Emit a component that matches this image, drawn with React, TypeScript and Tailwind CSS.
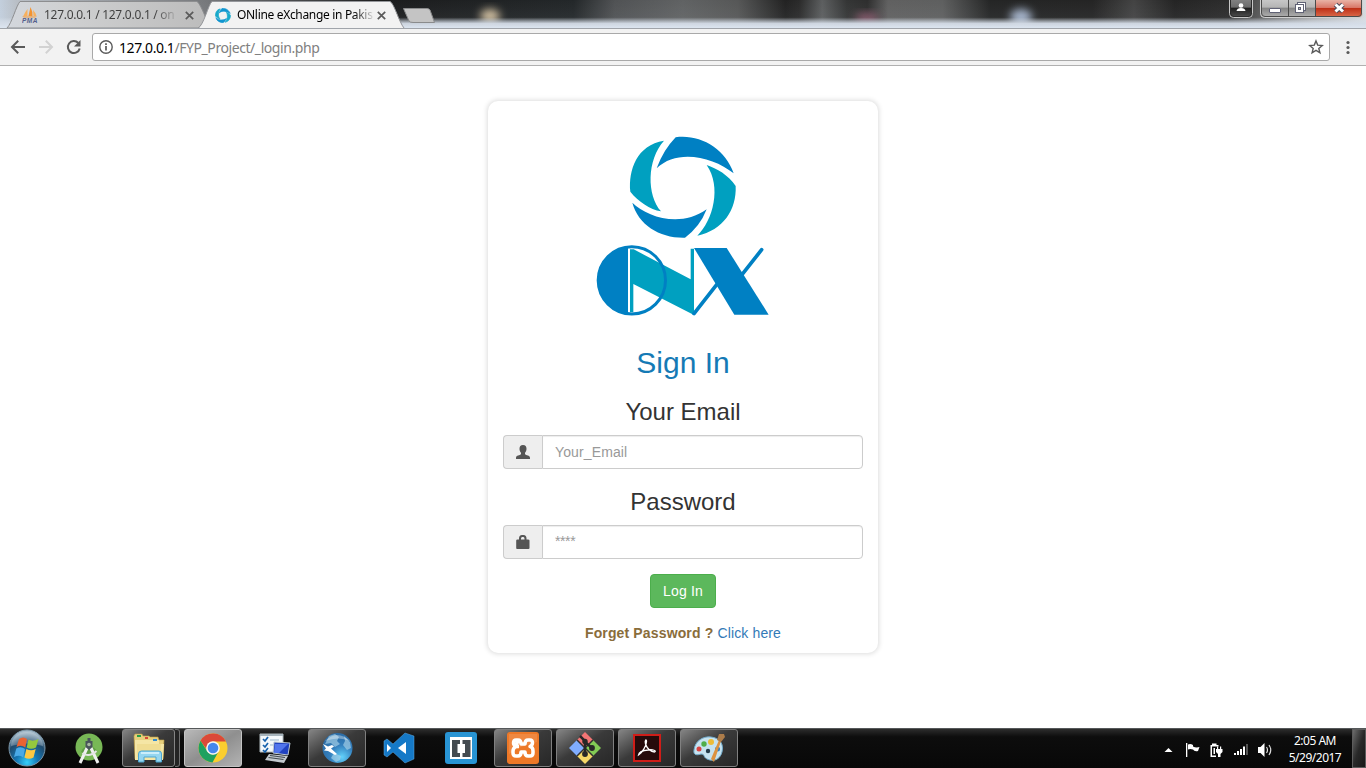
import React from "react";

function TitleBackdrop() {
  return (
    <svg className="col-start-1 row-start-1 h-7 w-[1366px]" viewBox="0 0 1366 28" preserveAspectRatio="none">
      <defs>
        <linearGradient id="glass" x1="0" x2="1366" y1="0" y2="0" gradientUnits="userSpaceOnUse">
          <stop offset="0" stopColor="#c3cfdd" />
          <stop offset="0.012" stopColor="#b9bfc6" />
          <stop offset="0.15" stopColor="#77797c" />
          <stop offset="0.28" stopColor="#1b1c1d" />
          <stop offset="0.42" stopColor="#232729" />
          <stop offset="0.45" stopColor="#505254" />
          <stop offset="0.5" stopColor="#606263" />
          <stop offset="0.54" stopColor="#565757" />
          <stop offset="0.575" stopColor="#222" />
          <stop offset="0.585" stopColor="#2a2a2a" />
          <stop offset="0.602" stopColor="#5c5e5f" />
          <stop offset="0.62" stopColor="#343535" />
          <stop offset="0.635" stopColor="#2e2e2e" />
          <stop offset="0.65" stopColor="#606060" />
          <stop offset="0.69" stopColor="#5e5f5f" />
          <stop offset="0.725" stopColor="#242525" />
          <stop offset="0.8" stopColor="#242424" />
          <stop offset="0.83" stopColor="#434343" />
          <stop offset="0.86" stopColor="#242424" />
          <stop offset="0.9" stopColor="#2c2c2c" />
          <stop offset="0.96" stopColor="#a3a3a3" />
          <stop offset="1" stopColor="#d6dade" />
        </linearGradient>
        <linearGradient id="haze" x1="0" x2="0" y1="0" y2="1">
          <stop offset="0" stopColor="#dce5ef" stopOpacity="0" />
          <stop offset="0.62" stopColor="#dce5ef" stopOpacity="0.05" />
          <stop offset="0.84" stopColor="#d5dde8" stopOpacity="0.95" />
          <stop offset="1" stopColor="#dce5f0" />
        </linearGradient>
        <linearGradient id="idle" x1="7" x2="205" y1="28" y2="0" gradientUnits="userSpaceOnUse">
          <stop offset="0" stopColor="#d3d7dd" />
          <stop offset=".3" stopColor="#cfd0d1" />
          <stop offset="1" stopColor="#bcbcbc" />
        </linearGradient>
        <filter id="soft" x="-50%" y="-50%" width="200%" height="200%">
          <feGaussianBlur stdDeviation="4" />
        </filter>
      </defs>
      <rect width="1366" height="28" fill="url(#glass)" />
      <ellipse cx="490" cy="16" rx="10" ry="7" fill="#d0be9e" filter="url(#soft)" />
      <ellipse cx="867" cy="18" rx="12" ry="5" fill="#87576a" filter="url(#soft)" />
      <ellipse cx="1021" cy="17" rx="11" ry="8" fill="#a4b3cb" filter="url(#soft)" />
      <rect width="1366" height="28" fill="url(#haze)" />
      <path d="M7 28C12 23 16 6 20 1.500H197C201 4 208 24 210 28Z" fill="url(#idle)" stroke="#8d8e90" />
      <path d="M198 29C204 25 208 5 212 1.500H390C394 3 399 22 404 29Z" fill="#f2f2f2" />
      <path d="M198 28C204 25 208 5 212 1.500H390C394 3 399 22 404 28" fill="none" stroke="#95979b" />
      <path d="M403.500 8.500H427Q429 8.500 430 10L434.500 22.500H413Q410 22.500 409 21Z" fill="#c4c4c4" stroke="#8a8b8c" />
    </svg>
  );
}

function RingMark({ className }: { className: string }) {
  return (
    <svg className={className} viewBox="148 42 322 320" strokeWidth="16">
      <path d="M230 145Q250 90 287 52C360 42 435 85 461 160C400 110 290 85 230 145Z" fill="#1296d0" stroke="#1296d0" />
      <path d="M380 135C410 145 445 165 467 198C470 270 430 330 352 347C400 300 425 200 380 135Z" fill="#18aacb" stroke="#18aacb" />
      <path d="M157 248C200 290 300 325 380 268Q360 320 315 353C240 355 175 315 157 248Z" fill="#1296d0" stroke="#1296d0" />
      <path d="M252 62C170 75 145 150 151 215C175 245 210 268 243 274C200 225 200 120 252 62Z" fill="#18aacb" stroke="#18aacb" />
    </svg>
  );
}

function TabClose() {
  return (
    <svg className="h-[9px] w-[9px] shrink-0" viewBox="0 0 9 9">
      <path d="M.8.8 8.200 8.200M8.200.8.8 8.200" stroke="#5a5a5a" strokeWidth="1.700" />
    </svg>
  );
}

function WindowControls() {
  return (
    <svg className="h-[19px] w-[137px]" viewBox="1229 0 137 19">
      <defs>
        <linearGradient id="wb" x1="0" x2="0" y1="0" y2="1">
          <stop offset="0" stopColor="#d6d6d6" />
          <stop offset=".56" stopColor="#b5b5b5" />
          <stop offset=".6" stopColor="#858585" />
          <stop offset="1" stopColor="#b2b2b2" />
        </linearGradient>
        <linearGradient id="ub" x1="0" x2="0" y1="0" y2="1">
          <stop offset="0" stopColor="#909090" />
          <stop offset=".56" stopColor="#6c6c6c" />
          <stop offset=".6" stopColor="#1d1d1d" />
          <stop offset="1" stopColor="#515151" />
        </linearGradient>
        <linearGradient id="rb" x1="0" x2="0" y1="0" y2="1">
          <stop offset="0" stopColor="#e9b3a6" />
          <stop offset=".44" stopColor="#d9796a" />
          <stop offset=".5" stopColor="#bf3118" />
          <stop offset="1" stopColor="#db6b4b" />
        </linearGradient>
      </defs>
      <rect x="1229.500" y="-6" width="23" height="23.500" rx="4" fill="url(#ub)" stroke="#c6c6c6" />
      <rect x="1260.500" y="-6" width="102" height="23.500" rx="4" fill="url(#wb)" stroke="#d0d0d0" />
      <path d="M1315.500 0V17H1358Q1362 17 1362 13V0Z" fill="url(#rb)" />
      <path d="M1261.500 0V13Q1261.500 16.500 1265 16.500H1358Q1361.500 16.500 1361.500 13V0M1288.500 0V17M1315.500 0V17" fill="none" stroke="#4b4b4b" />
      <path d="M1230.500 0V13Q1230.500 16.500 1234 16.500H1248Q1251.500 16.500 1251.500 13V0" fill="none" stroke="#2b2b2b" />
      <circle cx="1241" cy="5.500" r="2.300" fill="#fff" />
      <path d="M1236.500 11Q1237 8 1241 8T1245.500 11Z" fill="#fff" />
      <rect x="1269.500" y="8.500" width="11" height="4" rx=".5" fill="#fff" stroke="#606275" />
      <rect x="1297.500" y="2.500" width="8" height="8" fill="#fff" stroke="#606275" />
      <rect x="1295.500" y="4.500" width="8" height="8" fill="#fff" stroke="#606275" />
      <rect x="1298.500" y="7.500" width="2" height="2" fill="#bbb" stroke="#606275" />
      <path d="M1335.500 4.500 1343 11.500M1343 4.500 1335.500 11.500" stroke="#4c4c5c" strokeWidth="5" />
      <path d="M1335.500 4.500 1343 11.500M1343 4.500 1335.500 11.500" stroke="#fff" strokeWidth="3" />
    </svg>
  );
}

function TitleBar() {
  return (
    <header className="grid h-7 grid-cols-[1366px] overflow-hidden">
      <TitleBackdrop />
      <div className="z-10 col-start-1 row-start-1 flex h-7 items-start font-['Noto_Sans','Open_Sans',sans-serif] text-[12px] leading-4">
        <div className="flex h-7 w-[198px] items-center pt-0.5 pl-[22px]">
          <svg className="h-4 w-4 shrink-0" viewBox="0 0 16 16">
            <path d="M1 9.500Q3 5 5.500 2V9Z" fill="#f8b05c" />
            <path d="M6.500 9C7 6 8 3 8.500 0Q11 5 10.500 9.300Z" fill="#f39330" />
            <path d="M11 3Q14 6 14.500 9H11.500Z" fill="#f8b05c" />
            <path d="M0 9.500H15L13 10.500H2Z" fill="#f29a3e" />
            <text x="0" y="15.800" fill="#54608c" fontFamily="Liberation Sans" fontWeight="700" fontStyle="italic" fontSize="6.500" textLength="15.500">PMA</text>
          </svg>
          <span className="ml-1.5 w-[141px] shrink-0">
            <span className="inline-block bg-gradient-to-r from-[#3d3d3d] from-85% to-[#3d3d3d]/20 bg-clip-text whitespace-nowrap text-transparent tracking-[-0.28px]">127.0.0.1 / 127.0.0.1 / on</span>
          </span>
          <TabClose />
        </div>
        <div className="flex h-7 w-[206px] items-center pt-0.5 pl-[17px]">
          <RingMark className="h-[15px] w-4 shrink-0" />
          <span className="ml-1.5 w-[140px] shrink-0">
            <span className="inline-block bg-gradient-to-r from-black from-86% to-black/10 bg-clip-text whitespace-nowrap text-transparent tracking-[-0.32px]">ONline eXchange in Pakis</span>
          </span>
          <TabClose />
        </div>
        <div className="ml-auto"><WindowControls /></div>
      </div>
    </header>
  );
}

function Toolbar() {
  return (
    <div className="flex h-[38px] items-center border-t border-b border-t-[#a0a4aa] border-b-[#b0b0b0] bg-[#f2f2f2] font-['Noto_Sans','Open_Sans',sans-serif]">
      <svg className="h-9 w-[92px] shrink-0" viewBox="0 29 92 36" fill="none" strokeWidth="2">
        <path d="M25 47H12.500M18.200 40.800 12 47 18.200 53.200" stroke="#5a5a5a" />
        <path d="M39 47H51.500M45.800 40.800 52 47 45.800 53.200" stroke="#d2d2d2" />
        <path d="M78.300 43A6 6 0 1 0 79.700 48.500" stroke="#5a5a5a" />
        <path d="M80.500 40V46.500H74Z" fill="#5a5a5a" />
      </svg>
      <div className="flex h-7 w-[1238px] items-center rounded-[3px] border border-[#a9a9a9] bg-white pl-[6px] pr-[5px] text-[14px]">
        <svg className="h-[14px] w-[14px] shrink-0" viewBox="0 0 14 14" fill="none" stroke="#5a5a5a">
          <circle cx="7" cy="7" r="6.200" strokeWidth="1.400" />
          <path d="M7 6V10.500M7 3.300V5" strokeWidth="1.700" />
        </svg>
        <span className="ml-1.5 tracking-[-0.43px] whitespace-nowrap text-black">127.0.0.1<span className="text-[#808080]">/FYP_Project/_login.php</span></span>
        <svg className="ml-auto h-4 w-4" viewBox="0 0 16 16">
          <path d="M8 1.900 9.700 6.100 14.300 6.500 10.800 9.400 11.900 13.800 8 11.400 4.100 13.800 5.200 9.400 1.700 6.500 6.300 6.100Z" fill="none" stroke="#5a5a5a" strokeWidth="1.400" />
        </svg>
      </div>
      <svg className="ml-4 h-4 w-1" viewBox="0 0 4 16" fill="#5a5a5a">
        <circle cx="2" cy="3.500" r="1.600" /><circle cx="2" cy="8.500" r="1.600" /><circle cx="2" cy="13.500" r="1.600" />
      </svg>
    </div>
  );
}

function Logo() {
  return (
    <svg className="h-[210px] w-[210px]" viewBox="-6 0 630 630">
      <path d="M230 145Q250 90 287 52C360 42 435 85 461 160C400 110 290 85 230 145Z" fill="#0080c3" />
      <path d="M380 135C410 145 445 165 467 198C470 270 430 330 352 347C400 300 425 200 380 135Z" fill="#00a0c0" />
      <path d="M157 248C200 290 300 325 380 268Q360 320 315 353C240 355 175 315 157 248Z" fill="#0080c3" />
      <path d="M252 62C170 75 145 150 151 215C175 245 210 268 243 274C200 225 200 120 252 62Z" fill="#00a0c0" />
      <path d="M150 388H161L332 478V386H342V585L160 492V577H150Z" fill="#00a0c0" />
      <path d="M144 378.500A103.500 103.500 0 0 0 144 583.500Z" fill="#0080c3" />
      <circle cx="155.500" cy="481" r="101" fill="none" stroke="#0080c3" strokeWidth="9" />
      <path d="M342 384H440L566 584H463Z" fill="#0080c3" />
      <path d="M545 389 486 464M410 494 342 581" stroke="#0080c3" strokeWidth="11" strokeLinecap="round" />
    </svg>
  );
}

function Field({ icon, type, placeholder }: { icon: React.ReactNode; type: string; placeholder: string }) {
  return (
    <div className="flex h-[34px] w-[360px]">
      <span className="flex w-[39px] items-center justify-center rounded-l border border-r-0 border-[#ccc] bg-[#eee]">{icon}</span>
      <input
        type={type}
        placeholder={placeholder}
        className={
          type === "password"
            ? "w-[321px] rounded-r border border-[#ccc] bg-white px-3 pb-0.5 text-[14px] tracking-[-0.4px] shadow-[inset_0_1px_1px_rgba(0,0,0,0.075)] outline-none placeholder:text-[#999]"
            : "w-[321px] rounded-r border border-[#ccc] bg-white px-3 text-[14px] tracking-[0.12px] shadow-[inset_0_1px_1px_rgba(0,0,0,0.075)] outline-none placeholder:text-[#999]"
        }
      />
    </div>
  );
}

function LoginCard() {
  return (
    <form className="flex h-[552px] w-[390px] flex-col items-center rounded-[10px] bg-white pt-[19px] font-['Liberation_Sans',Arial,sans-serif] text-[14px] text-[#333] shadow-[0_0_5px_1px_#ddd]" onSubmit={(e) => e.preventDefault()}>
      <Logo />
      <h2 className="mt-4 text-[30px] leading-[33px] text-[#157ab5]">Sign In</h2>
      <h3 className="mt-5 text-[24px] leading-[26px]">Your Email</h3>
      <div className="mt-[10px]">
        <Field
          type="text"
          placeholder="Your_Email"
          icon={
            <svg className="h-[14px] w-[14px]" viewBox="0 0 14 14" fill="#555">
              <path d="M7 0C9.500 0 10.500 1.400 10.500 3.700C10.500 5.500 9.900 6.800 9 7.700V9.300C10 10.300 14 10.500 14 12.700V14H0V12.700C0 10.500 4 10.300 5 9.300V7.700C4.100 6.800 3.500 5.500 3.500 3.700C3.500 1.400 4.500 0 7 0Z" />
            </svg>
          }
        />
      </div>
      <h3 className="mt-5 text-[24px] leading-[26px]">Password</h3>
      <div className="mt-[10px]">
        <Field
          type="password"
          placeholder="****"
          icon={
            <svg className="h-[14px] w-[14px]" viewBox="0 0 14 14" fill="#555">
              <path d="M1.500 4.500H3V3.500Q3 0 6 0H7.500Q10.500 0 10.500 3.500V4.500H12Q13.500 4.500 13.500 5.500V13Q13.500 14 12.500 14H1Q.2 14 .2 13V5.500Q.2 4.500 1.500 4.500ZM5 4.500H8.500V3.800Q8.500 2 7.300 2H6.200Q5 2 5 3.800Z" fillRule="evenodd" />
            </svg>
          }
        />
      </div>
      <button className="mt-[15px] h-[34px] w-[66px] rounded border border-[#4cae4c] bg-[#5cb85c] tracking-[0.15px] whitespace-nowrap text-white">Log In</button>
      <p className="mt-[15px] leading-5 tracking-[0.14px] whitespace-nowrap">
        <b className="text-[#8a6d3b]">Forget Password ?</b> <a className="text-[#337ab7]" href="#">Click here</a>
      </p>
    </form>
  );
}

function TaskButton({ active, children }: { active?: boolean; children: React.ReactNode }) {
  return (
    <div
      className={
        active
          ? "flex h-[38px] w-[58px] items-center justify-center rounded-[3px] border border-[#c4c4c4] bg-gradient-to-br from-[#b9b9b9] via-[#8f8f8f] to-[#b3b3b3]"
          : "flex h-[38px] w-[58px] items-center justify-center rounded-[3px] border border-[#808080] bg-gradient-to-br from-[#858585] via-[#3a3a3a] via-45% to-[#272727]"
      }
    >
      {children}
    </div>
  );
}

function Plain({ children }: { children: React.ReactNode }) {
  return <div className="flex h-[38px] w-[58px] items-center justify-center">{children}</div>;
}

function StartOrb() {
  return (
    <svg className="h-[38px] w-[38px]" viewBox="0 0 38 38">
      <defs>
        <radialGradient id="orb" cx=".5" cy=".9" r=".85">
          <stop offset="0" stopColor="#36d0fa" />
          <stop offset=".35" stopColor="#1577b5" />
          <stop offset=".7" stopColor="#204b6d" />
          <stop offset="1" stopColor="#a6bccb" />
        </radialGradient>
      </defs>
      <circle cx="19" cy="19" r="18" fill="url(#orb)" stroke="#7b96a8" />
      <path d="M3 17A16 14 0 0 1 35 17Q19 12 3 17Z" fill="#fff" opacity=".25" />
      <path d="M11 10Q15 7 19 10L17.300 18.500Q13.500 15.500 8.500 18Z" fill="#ea6332" />
      <path d="M20.500 10.500Q24.500 13 30.500 10L28 18.500Q23 21 18.700 18.500Z" fill="#94c83d" />
      <path d="M8.300 19.500Q13 17 17 20L15.200 28.500Q12 25.500 6 28Z" fill="#4aa9e6" />
      <path d="M18.400 20Q23 22.500 27.700 20L25.500 28.500Q21 31 16.400 28.500Z" fill="#fdc843" />
    </svg>
  );
}

function AndroidStudio() {
  return (
    <svg className="h-8 w-8" viewBox="0 0 32 32">
      <circle cx="16" cy="15" r="13.500" fill="#78b856" />
      <path d="M8 20A8.500 8.500 0 0 1 24 20L20 22H12Z" fill="#5f9d45" />
      <path d="M14.500 15 7 31M17.500 15 25 31" stroke="#f0f0f0" strokeWidth="3" />
      <path d="M9.500 21Q16 26 23.500 19" fill="none" stroke="#e5e5e5" strokeWidth="2" />
      <path d="M14.500 6H17.500V9H19.500V15L16 18 12.500 15V9H14.500Z" fill="#49545a" />
      <circle cx="16" cy="12.500" r="1.800" fill="#a6b7a0" />
    </svg>
  );
}

function Explorer() {
  return (
    <svg className="h-8 w-8" viewBox="0 0 32 32">
      <path d="M1 4 2 2H9L10 4H16L17 5H25L26 8H31L30 27H2Z" fill="#e7cf7c" stroke="#bd9d48" strokeWidth=".6" />
      <path d="M2 8H26V12H31L30 28H2Z" fill="#f5e6a5" />
      <path d="M4 12H28V25H4Z" fill="#eed88b" opacity=".7" />
      <path d="M4 3H8V5H4Z" fill="#259e47" />
      <path d="M12 5H15V7H12Z" fill="#d54a36" />
      <path d="M20 7H24V9H20Z" fill="#338bd0" />
      <path d="M5.500 30V22Q5.500 19 8.500 19H26Q28.500 19 28.500 22V30H23V25H11V30Z" fill="#95d6f0" stroke="#4ca7d1" />
      <path d="M8 21H26" stroke="#def6ff" strokeWidth="1.500" />
    </svg>
  );
}

function Chrome() {
  return (
    <svg className="h-[30px] w-[30px]" viewBox="0 0 30 30">
      <circle cx="15" cy="15" r="14.500" fill="#fbce2f" />
      <path d="M2.500 7.700A14.500 14.500 0 0 1 28 8.500H15A6.500 6.500 0 0 0 8.700 16.500Z" fill="#db4939" />
      <path d="M2.500 7.700A14.500 14.500 0 0 0 14.500 29.500L20.500 18.500A6.500 6.500 0 0 1 9.300 18.200Z" fill="#1da160" />
      <circle cx="15" cy="15" r="6.800" fill="#f5f5f5" />
      <circle cx="15" cy="15" r="5.300" fill="#4587ed" />
    </svg>
  );
}

function TaskList() {
  return (
    <svg className="h-8 w-8" viewBox="0 0 32 32">
      <path d="M1 2H24V20H1Z" fill="#f4f8fb" stroke="#aeb8bd" />
      <path d="M1 2H24V4H1Z" fill="#a7b4bc" />
      <path d="M4 7 6 9 9 5M4 13 6 15 9 11M4 18 6 20 9 16" fill="none" stroke="#1762ad" strokeWidth="1.700" />
      <path d="M11 8H20M11 13H14" stroke="#9ab5c9" />
      <path d="M15 10 31 11 29 23 14 21Z" fill="#2042c0" stroke="#becbd3" />
      <path d="M16 12H29L20 21H15Z" fill="#668cff" opacity=".7" />
      <path d="M10 22 29 24 25 31 6 28Z" fill="#c3c9ce" />
      <path d="M11 23.500 26 25.500M9.500 25.500 24.500 27.500" stroke="#414b51" strokeWidth="1.200" />
    </svg>
  );
}

function Globe() {
  return (
    <svg className="h-8 w-8" viewBox="0 0 32 32">
      <defs>
        <radialGradient id="globe" cx=".65" cy=".8" r=".8">
          <stop stopColor="#62d2fb" /><stop offset=".5" stopColor="#347fbd" /><stop offset="1" stopColor="#2b6ba4" />
        </radialGradient>
      </defs>
      <circle cx="16.500" cy="16" r="15" fill="url(#globe)" />
      <path d="M8 4 14 2 18 5 16 9 19 12 14 15 10 11 4 12ZM23 4 29 10 30 16 26 18 22 13 24 9ZM13 21 20 24 19 28 15 30 10 26Z" fill="#a9d2e8" opacity=".65" />
      <path d="M2 12 7 14.500 11 13 13 14.500 10 16.500 16 22 14 23 7 19 3 18.500 5 16.500Z" fill="#fff" />
      <path d="M4 9Q16 -3 29 9Q18 4 4 9Z" fill="#fff" opacity=".35" />
    </svg>
  );
}

function VsCode() {
  return (
    <svg className="h-8 w-8" viewBox="0 0 32 32">
      <path d="M22 1 31 4V27L22 31 10 20 4 25 1 23V9L4 7 10 12Z" fill="#1579c7" stroke="#63a9dd" strokeWidth=".5" />
      <path d="M4 12 8 16 4 20ZM23 10V22L15 16Z" fill="#fff" />
    </svg>
  );
}

function Brackets() {
  return (
    <svg className="h-8 w-8" viewBox="0 0 32 32">
      <rect width="32" height="32" rx="3" fill="#2894d4" />
      <rect x="5" y="5" width="22" height="22" fill="#fff" />
      <path d="M7 8H15V12H12.500V21H15V25H7ZM17.500 8H25.500V25H17.500V21H20V12H17.500Z" fill="#444b50" />
    </svg>
  );
}

function Xampp() {
  return (
    <svg className="h-8 w-8" viewBox="0 0 32 32">
      <rect width="32" height="32" rx="3" fill="#ed7827" />
      <path d="M2 2H30V10Q15 13 2 22Z" fill="#fff" opacity=".12" />
      <path d="M11 8H9Q6.500 8 6.500 11Q6.500 13 9 14.500M9 14.500H12M9 14.500Q6 16 6 19V21Q6 24 9 24H11Q14 24 14 20H18Q18 24 21 24H23Q26 24 26 21V19Q26 15 23 14.500Q25.500 13 25.500 11Q25.500 8 23 8H21Q18 8 18 12H14Q14 8 11 8Z" fill="none" stroke="#fff" strokeWidth="3.500" strokeLinejoin="round" />
    </svg>
  );
}

function Git() {
  return (
    <svg className="h-8 w-8" viewBox="0 0 32 32">
      <path d="M16 0 24 8 16 16 8 8Z" fill="#f27575" />
      <path d="M8 8 16 16 8 24 0 16Z" fill="#80adff" />
      <path d="M24 8 32 16 24 24 16 16Z" fill="#82cb55" />
      <path d="M16 16 24 24 16 32 8 24Z" fill="#f6d868" />
      <path d="M8 8 24 24M24 8 8 24" stroke="#303030" strokeWidth="1.500" />
      <path d="M11 4 16 9V23M16 10 23 16" fill="none" stroke="#272727" strokeWidth="2.500" />
      <circle cx="16" cy="9.500" r="2.700" fill="#272727" /><circle cx="16" cy="22" r="2.900" fill="#272727" /><circle cx="23" cy="16" r="2.900" fill="#272727" />
    </svg>
  );
}

function Acrobat() {
  return (
    <svg className="h-7 w-7" viewBox="0 0 28 28">
      <rect x="1" y="1" width="26" height="26" fill="#260b0b" stroke="#cf1d18" strokeWidth="2" />
      <path d="M5.500 21C9 19 13.500 12 13.500 7.500C13.500 4.500 11.500 6 12.500 10C14 14.500 18 18 21.500 18C24 17 20 15 15 16C10 16.500 6 18 5.500 21Z" fill="none" stroke="#fff" strokeWidth="1.300" />
    </svg>
  );
}

function Paint() {
  return (
    <svg className="h-8 w-8" viewBox="0 0 32 32">
      <path d="M1 18C2 9 10 4 18 5C27 6 31 12 29 20C27 28 20 30 14 27C10 25 12 22 8 22C5 23 0 24 1 18Z" fill="#c7e3f0" stroke="#71aaca" />
      <circle cx="6" cy="17" r="2.500" fill="#d94442" /><circle cx="11" cy="12" r="2.700" fill="#51ae4a" /><circle cx="18" cy="10" r="3" fill="#edbc38" /><circle cx="15" cy="19" r="2.200" fill="#253c4b" />
      <circle cx="24.500" cy="17" r="2.500" fill="#3380c3" />
      <path d="M28 9 21 30 18 27 26 8Z" fill="#dc9240" />
      <path d="M24 8 26 2 31 2 32 5 28 10Z" fill="#ac7c4a" />
    </svg>
  );
}

function Tray() {
  return (
    <svg className="h-10 w-[120px]" viewBox="1160 728 120 40" fill="#fff">
      <path d="M1164.500 751 1168.500 747 1172.500 751Z" />
      <path d="M1186 742H1187.300V756H1186ZM1188 743.500Q1190.500 742.500 1193 744V745.500Q1196 747 1199.500 746L1198 750Q1194.500 751 1193 748.500Q1190 747.500 1188 748.500Z" />
      <path d="M1212 744V742.500H1216.500V744H1218.500V745.500H1212V754.500H1216V756H1210.500V744Z" />
      <path d="M1213.500 747H1215V753H1213.500Z" />
      <path d="M1217 745.500H1218.200V748H1220V745.500H1221.200V748H1222.500V751L1220.500 753V756H1218V753L1216 751V748H1217Z" />
      <path d="M1234 752H1236V754H1234ZM1237 750H1239V754H1237ZM1240 748H1242V754H1240ZM1243 745.500H1245V754H1243Z" />
      <path d="M1246 743H1248V754H1246Z" fill="#555" />
      <path d="M1258 746H1260.500L1264.500 742V756L1260.500 752H1258Z" />
      <path d="M1266.500 746Q1268.500 749 1266.500 752M1269 744Q1272.500 749 1269 754" fill="none" stroke="#ddd" strokeWidth="1.200" />
    </svg>
  );
}

function Taskbar() {
  return (
    <footer className="flex h-10 items-start border-t border-[#55585a] bg-gradient-to-b from-[#2d2d2d] via-[#0d0d0d] via-20% to-[#080808]">
      <div className="flex h-[38px] w-[60px] items-center pl-2"><StartOrb /></div>
      <div className="flex items-start gap-1">
        <Plain><AndroidStudio /></Plain>
        <div className="flex w-[58px]">
          <div className="flex h-[38px] w-[53px] items-center justify-center rounded-[3px] border border-[#858585] bg-gradient-to-br from-[#858585] via-[#3a3a3a] via-45% to-[#272727]"><Explorer /></div>
          <div className="h-[38px] w-[5px] rounded-r-[3px] border border-l-0 border-[#707070] bg-[#242424]" />
        </div>
        <TaskButton active><Chrome /></TaskButton>
        <Plain><TaskList /></Plain>
        <TaskButton><Globe /></TaskButton>
        <Plain><VsCode /></Plain>
        <Plain><Brackets /></Plain>
        <TaskButton><Xampp /></TaskButton>
        <TaskButton><Git /></TaskButton>
        <TaskButton><Acrobat /></TaskButton>
        <TaskButton><Paint /></TaskButton>
      </div>
      <div className="ml-auto flex items-start">
        <Tray />
        <div className="w-[70px] pt-[3px] text-center font-['Noto_Sans','Open_Sans',sans-serif] text-[12px] leading-[17px] tracking-[-0.5px] text-white">
          <div>2:05 AM</div>
          <div>5/29/2017</div>
        </div>
        <div className="ml-[2px] h-[39px] w-[14px] border border-[#5c5c5c] bg-gradient-to-br from-[#6d6d6d] via-[#292929] to-[#171717]" />
      </div>
    </footer>
  );
}

export default function App() {
  return (
    <div className="flex h-[768px] w-[1366px] flex-col overflow-hidden bg-white">
      <TitleBar />
      <Toolbar />
      <main className="flex flex-1 justify-center pt-[35px]">
        <LoginCard />
      </main>
      <Taskbar />
    </div>
  );
}
